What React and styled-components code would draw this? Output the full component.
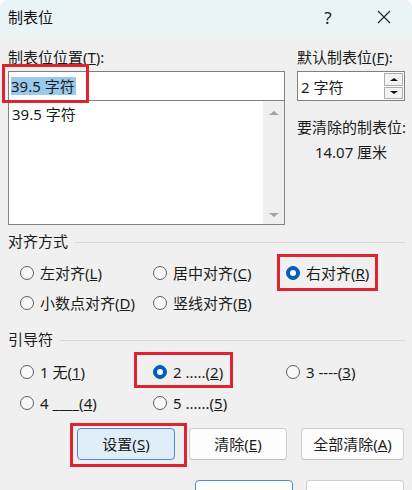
import React from "react";
import styled, { createGlobalStyle } from "styled-components";

const Global = createGlobalStyle`
  html, body { margin: 0; padding: 0; background: #ffffff; overflow: hidden; }
  #root { width: 412px; height: 490px; }
`;

const Dialog = styled.div`
  width: 412px;
  height: 490px;
  background: #f0f0f0;
  border-radius: 8px 8px 0 0;
  overflow: hidden;
  display: flex;
  flex-direction: column;
  font-family: "Noto Sans", "Noto Sans CJK SC", sans-serif;
  font-size: 15px;
  color: #1b1b1b;
`;

const TitleBar = styled.div`
  height: 34px;
  flex: none;
  background: #e9f4f6;
  display: flex;
  align-items: center;
  padding-left: 8px;
`;

const Title = styled.div`
  flex: 1;
  line-height: 20px;
  color: #111;
`;

const TitleButton = styled.div`
  width: 56px;
  height: 34px;
  display: flex;
  align-items: center;
  justify-content: center;
  font-size: 17px;
  color: #222;
`;

const Body = styled.div`
  padding: 13px 7px 0 8px;
  display: flex;
  flex-direction: column;
`;

const TopRow = styled.div`
  display: flex;
  gap: 12px;
`;

const Column = styled.div`
  width: ${(p) => p.$w}px;
  display: flex;
  flex-direction: column;
`;

const Label = styled.div`
  line-height: 20px;
  margin-top: ${(p) => p.$mt || 0}px;
  margin-bottom: ${(p) => p.$mb || 0}px;
  text-align: ${(p) => p.$align || "left"};
  white-space: nowrap;
`;

const Anchor = styled.div`
  position: relative;
`;

const TextInput = styled.div`
  height: 30px;
  box-sizing: border-box;
  border: 1px solid #7f7f7f;
  background: #fff;
  display: flex;
  align-items: center;
  padding-left: 2px;
`;

const Selected = styled.span`
  background: #99c9ef;
  line-height: 18px;
  padding-right: 1px;
`;

const ListBox = styled.div`
  height: 125px;
  margin-top: -1px;
  box-sizing: border-box;
  border: 1px solid #838383;
  border-top-color: #b5b5b5;
  background: #fff;
  display: flex;
`;

const ListItems = styled.div`
  flex: 1;
  padding: 3px 3px;
  line-height: 20px;
`;

const ScrollBar = styled.div`
  width: 21px;
  background: #f0f0f0;
  display: flex;
  flex-direction: column;
  align-items: center;
  justify-content: space-between;
  padding: 10px 0 7px;
`;

const Arrow = styled.div`
  width: 0;
  height: 0;
  border-left: ${(p) => p.$size}px solid transparent;
  border-right: ${(p) => p.$size}px solid transparent;
  ${(p) => (p.$down ? "border-top" : "border-bottom")}: ${(p) => p.$size - 1}px solid ${(p) => p.$color};
`;

const SpinBox = styled.div`
  height: 30px;
  box-sizing: border-box;
  border: 1px solid #7f7f7f;
  background: #fff;
  display: flex;
`;

const SpinValue = styled.div`
  flex: 1;
  display: flex;
  align-items: center;
  padding-left: 3px;
`;

const SpinButtons = styled.div`
  width: 19px;
  display: flex;
  flex-direction: column;
  padding: 1px 1px 1px 0;
  gap: 1px;
`;

const SpinButton = styled.div`
  flex: 1;
  box-sizing: border-box;
  border: 1px solid #adadad;
  background: #f3f3f3;
  display: flex;
  align-items: center;
  justify-content: center;
`;

const GroupHeader = styled.div`
  margin-top: ${(p) => p.$mt}px;
  display: flex;
  align-items: center;
  line-height: 20px;
`;

const GroupLine = styled.div`
  flex: 1;
  height: 1px;
  background: #d9d9d9;
  margin-left: 7px;
  margin-top: 2px;
`;

const RadioGrid = styled.div`
  display: grid;
  grid-template-columns: 133px 133px 133px;
  grid-auto-rows: ${(p) => p.$row}px;
  padding-left: ${(p) => p.$pl}px;
  margin-top: 7px;
`;

const RadioItem = styled.div`
  position: relative;
  display: flex;
  align-items: center;
  gap: 6px;
  white-space: nowrap;
  line-height: 20px;
`;

const RadioCircle = styled.span`
  width: 14px;
  height: 14px;
  box-sizing: border-box;
  border-radius: 50%;
  flex: none;
  display: flex;
  align-items: center;
  justify-content: center;
  border: 1px solid ${(p) => (p.$on ? "#005fb8" : "#5f5f5f")};
  background: ${(p) => (p.$on ? "#005fb8" : "#f8f8f8")};
  &::after {
    content: "";
    display: ${(p) => (p.$on ? "block" : "none")};
    width: 6px;
    height: 6px;
    border-radius: 50%;
    background: #fff;
  }
`;

const ButtonRow = styled.div`
  display: flex;
  justify-content: flex-end;
  gap: ${(p) => p.$gap}px;
  margin-top: ${(p) => p.$mt}px;
  margin-right: 1px;
`;

const Button = styled.div`
  position: relative;
  width: ${(p) => p.$w}px;
  height: ${(p) => p.$h || 32}px;
  box-sizing: border-box;
  border-radius: 4px;
  border: 1px solid ${(p) => (p.$accent ? "#4a8ad0" : "#d0d0d0")};
  border-bottom-color: ${(p) => (p.$accent ? "#4a8ad0" : "#bcbcbc")};
  background: ${(p) => (p.$focus ? "#e0eef9" : "#fdfdfd")};
  display: flex;
  align-items: center;
  justify-content: center;
  line-height: 20px;
  white-space: nowrap;
`;

const RedMark = styled.div`
  position: absolute;
  left: ${(p) => p.$l}px;
  top: ${(p) => p.$t}px;
  width: ${(p) => p.$w}px;
  height: ${(p) => p.$h}px;
  box-sizing: border-box;
  border: 3px solid #dc2530;
  pointer-events: none;
`;

const Radio = ({ on, children, mark }) => (
  <RadioItem>
    <RadioCircle $on={on} />
    <span>{children}</span>
    {mark}
  </RadioItem>
);

export default function App() {
  return (
    <>
      <Global />
      <Dialog>
        <TitleBar>
          <Title>制表位</Title>
          <TitleButton>?</TitleButton>
          <TitleButton>
            <svg width="14" height="14" viewBox="0 0 14 14">
              <path d="M1 1 L13 13 M13 1 L1 13" stroke="#222" strokeWidth="1.1" fill="none" />
            </svg>
          </TitleButton>
        </TitleBar>
        <Body>
          <TopRow>
            <Column $w={277}>
              <Label $mb={4}>
                制表位位置(<u>T</u>):
              </Label>
              <Anchor>
                <TextInput>
                  <Selected>39.5 字符</Selected>
                </TextInput>
                <RedMark $l={-6} $t={-7} $w={87} $h={39} />
              </Anchor>
              <ListBox>
                <ListItems>39.5 字符</ListItems>
                <ScrollBar>
                  <Arrow $size={5} $color="#a3a3a3" />
                  <Arrow $size={5} $color="#a3a3a3" $down />
                </ScrollBar>
              </ListBox>
            </Column>
            <Column $w={108}>
              <Label $mb={4}>
                默认制表位(<u>F</u>):
              </Label>
              <SpinBox>
                <SpinValue>2 字符</SpinValue>
                <SpinButtons>
                  <SpinButton>
                    <Arrow $size={4} $color="#111" />
                  </SpinButton>
                  <SpinButton>
                    <Arrow $size={4} $color="#111" $down />
                  </SpinButton>
                </SpinButtons>
              </SpinBox>
              <Label $mt={16}>要清除的制表位:</Label>
              <Label $mt={5} $align="center">
                14.07 厘米
              </Label>
            </Column>
          </TopRow>

          <GroupHeader $mt={6}>
            <span>对齐方式</span>
            <GroupLine />
          </GroupHeader>
          <RadioGrid $row={30} $pl={12}>
            <Radio>
              左对齐(<u>L</u>)
            </Radio>
            <Radio>
              居中对齐(<u>C</u>)
            </Radio>
            <Radio on mark={<RedMark $l={-9} $t={-4} $w={101} $h={37} />}>
              右对齐(<u>R</u>)
            </Radio>
            <Radio>
              小数点对齐(<u>D</u>)
            </Radio>
            <Radio>
              竖线对齐(<u>B</u>)
            </Radio>
          </RadioGrid>

          <GroupHeader $mt={11}>
            <span>引导符</span>
            <GroupLine />
          </GroupHeader>
          <RadioGrid $row={31} $pl={12}>
            <Radio>
              1 无(<u>1</u>)
            </Radio>
            <Radio on mark={<RedMark $l={-19} $t={-4} $w={99} $h={36} />}>
              2 .....(<u>2</u>)
            </Radio>
            <Radio>
              3 ----(<u>3</u>)
            </Radio>
            <Radio>
              4 ____(<u>4</u>)
            </Radio>
            <Radio>
              5 ......(<u>5</u>)
            </Radio>
          </RadioGrid>

          <ButtonRow $gap={14} $mt={10}>
            <Button $w={98} $focus $accent>
              设置(<u>S</u>)
              <RedMark $l={-8} $t={-6} $w={117} $h={44} />
            </Button>
            <Button $w={98}>
              清除(<u>E</u>)
            </Button>
            <Button $w={103}>
              全部清除(<u>A</u>)
            </Button>
          </ButtonRow>
          <ButtonRow $gap={13} $mt={20}>
            <Button $w={98} $h={44} $accent>
              确定
            </Button>
            <Button $w={98} $h={44}>
              取消
            </Button>
          </ButtonRow>
        </Body>
      </Dialog>
    </>
  );
}
